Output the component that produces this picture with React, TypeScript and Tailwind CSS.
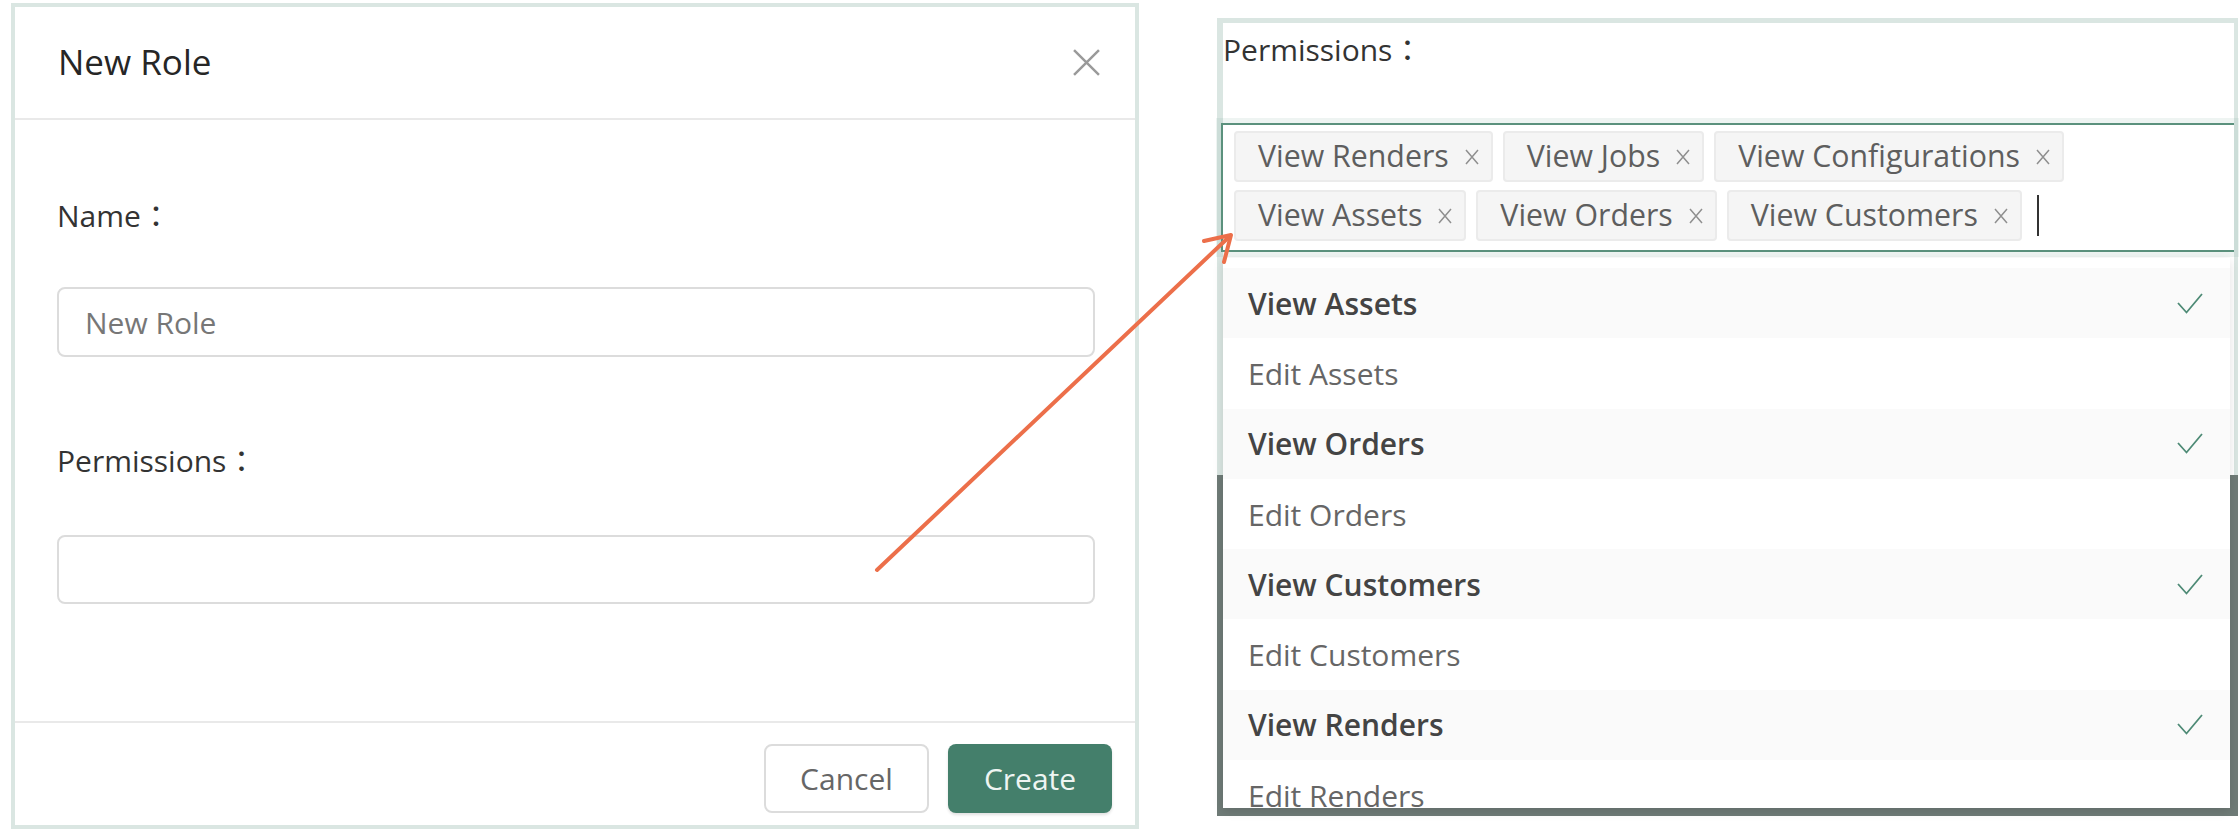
import React from "react";

const tags = [
  ["View Renders", "View Jobs", "View Configurations"],
  ["View Assets", "View Orders", "View Customers"],
];

const options = [
  { name: "View Assets", selected: true },
  { name: "Edit Assets", selected: false },
  { name: "View Orders", selected: true },
  { name: "Edit Orders", selected: false },
  { name: "View Customers", selected: true },
  { name: "Edit Customers", selected: false },
  { name: "View Renders", selected: true },
  { name: "Edit Renders", selected: false },
];

const CloseIcon = ({ size, stroke }: { size: number; stroke: number }) => (
  <svg width={size} height={size} viewBox="0 0 26 26" fill="none">
    <path d="M1 1L25 25M25 1L1 25" stroke="#9a9a9a" strokeWidth={stroke} />
  </svg>
);

const Check = () => (
  <svg width="26" height="21" viewBox="0 0 26 21" fill="none">
    <path d="M1 10L9.5 19.5L25 1" stroke="#4d8a75" strokeWidth="1.8" />
  </svg>
);

const Tag = ({ label }: { label: string }) => (
  <div className="flex h-[51px] items-center rounded-[4px] border-2 border-[#ebebeb] bg-[#f5f5f5] pl-[22px] pr-[12px] text-[30.3px] text-[#5e5e5e]">
    <span className="leading-none">{label}</span>
    <span className="ml-[16px] flex">
      <svg width="14" height="16" viewBox="0 0 14 16" fill="none">
        <path d="M1 1L13 15M13 1L1 15" stroke="#8f8f8f" strokeWidth="1.5" />
      </svg>
    </span>
  </div>
);

const App = () => {
  return (
    <div className="relative flex h-[830px] w-[2240px] items-start overflow-hidden bg-white font-['Open_Sans','Noto_Sans_CJK_TC',sans-serif]">
      {/* New Role dialog */}
      <div className="ml-[11px] mt-[3px] flex h-[826px] w-[1128px] flex-col border-4 border-[#dae6e2] bg-white">
        <div className="flex h-[111px] items-center justify-between pl-[43px] pr-[35px]">
          <span className="text-[35px] text-[#262626]">New Role</span>
          <CloseIcon size={27} stroke={2.4} />
        </div>
        <div className="h-[2px] bg-[#e9e9e9]" />
        <div className="flex-1 pl-[42px] pr-[40px] pt-[76px]">
          <div className="text-[30px] leading-[40px] text-[#333]">Name：</div>
          <div className="mt-[51px] flex h-[70px] items-center rounded-[8px] border-2 border-[#dcdcdc] px-[26px] text-[30px] text-[#777]">
            New Role
          </div>
          <div className="mt-[84px] text-[30px] leading-[40px] text-[#333]">Permissions：</div>
          <div className="mt-[54px] h-[69px] rounded-[8px] border-2 border-[#dcdcdc]" />
        </div>
        <div className="h-[2px] bg-[#e9e9e9]" />
        <div className="flex h-[102px] justify-end gap-[19px] pr-[23px] pt-[21px]">
          <button className="flex h-[69px] w-[165px] items-center justify-center rounded-[8px] border-2 border-[#dcdcdc] bg-white text-[30px] text-[#666]">
            Cancel
          </button>
          <button className="flex h-[69px] w-[164px] items-center justify-center rounded-[8px] bg-[#447f6b] text-[30px] text-[#eef5f2] shadow-[0_2px_3px_rgba(0,0,0,0.12)]">
            Create
          </button>
        </div>
      </div>

      {/* Zoomed permissions select */}
      <div className="relative ml-[78px] mt-[18px] flex w-[1021px] flex-col">
        <div className="h-[457px] border-l-[6px] border-r-[4px] border-t-[5px] border-[#dae6e2] bg-white">
          <div className="mt-[7px] text-[30px] leading-[40px] text-[#333]">Permissions：</div>
          <div className="-ml-[2px] mt-[53px] flex h-[129px] flex-col gap-[8px] border-2 border-r-0 border-[#5b917d] pl-[11px] pt-[6px] shadow-[0_0_0_5px_rgba(91,145,125,0.1)]">
            {tags.map((row, i) => (
              <div key={i} className="flex items-center gap-[10px]">
                {row.map((t) => (
                  <Tag key={t} label={t} />
                ))}
                {i === 1 && <div className="ml-[5px] h-[41px] w-[2px] bg-[#333]" />}
              </div>
            ))}
          </div>
        </div>
        <div className="h-[341px] bg-[#6f7b77]" />

        {/* dropdown menu */}
        <div className="absolute left-[6px] top-[240px] h-[550px] w-[1007px] overflow-hidden bg-white pt-[10px] shadow-[0_3px_10px_rgba(0,0,0,0.12)]">
          {options.map((o) => (
            <div
              key={o.name}
              className={`flex h-[70.3px] items-center justify-between pl-[25px] pr-[27px] text-[30px] ${
                o.selected ? "bg-[#fafafa] font-semibold text-[#444]" : "bg-white text-[#666]"
              }`}
            >
              <span>{o.name}</span>
              {o.selected && <Check />}
            </div>
          ))}
        </div>
      </div>

      {/* annotation arrow */}
      <svg className="pointer-events-none absolute left-0 top-0" width="2240" height="830" fill="none">
        <path d="M877 570L1230 236" stroke="#ec6f4a" strokeWidth="4" strokeLinecap="round" />
        <path d="M1204 241L1231 235L1224 262" stroke="#ec6f4a" strokeWidth="4" strokeLinecap="round" strokeLinejoin="round" />
      </svg>
    </div>
  );
};

export default App;
